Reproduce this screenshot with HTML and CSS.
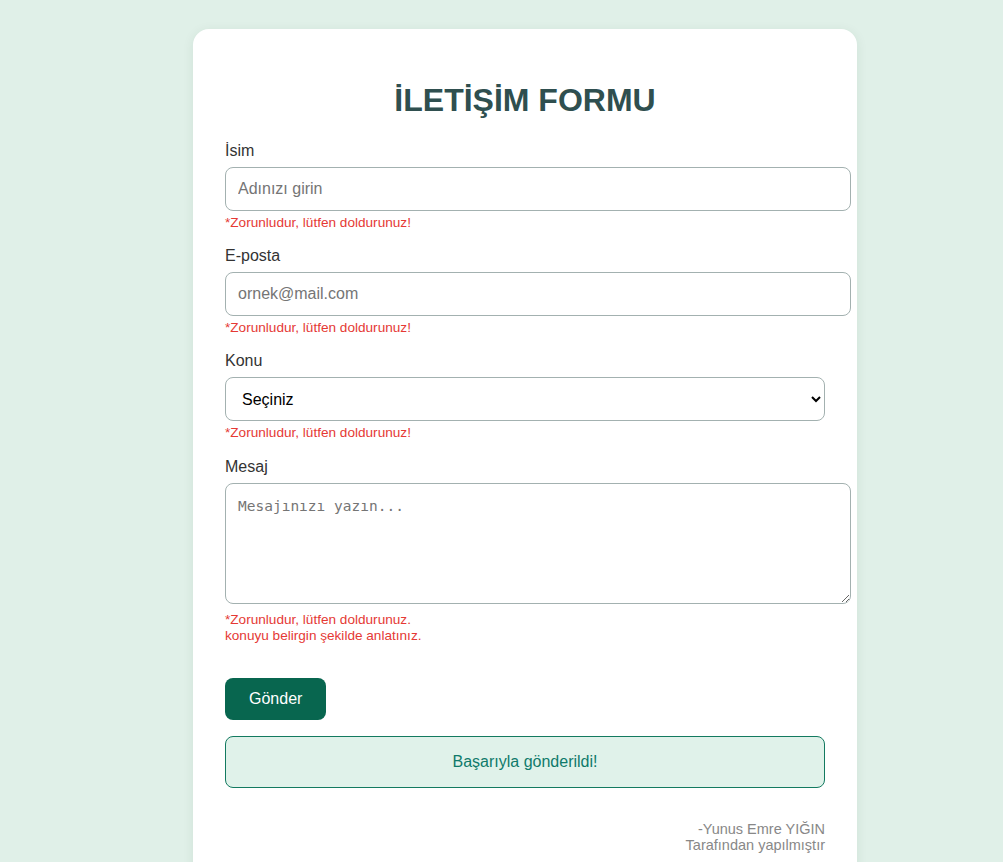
FILE: index.html
```html
<!DOCTYPE html>
<html lang="tr">
<head>
<meta charset="utf-8">
<title>İletişim Formu</title>
<link rel="stylesheet" href="styles.css">
</head>
<body>
<main class="page">
  <form class="card">
    <h1 class="title">İLETİŞİM FORMU</h1>

    <div class="group">
      <label class="label" for="isim">İsim</label>
      <input class="field" id="isim" type="text" placeholder="Adınızı girin">
      <div class="error">*Zorunludur, lütfen doldurunuz!</div>
    </div>

    <div class="group">
      <label class="label" for="eposta">E-posta</label>
      <input class="field" id="eposta" type="email" placeholder="ornek@mail.com">
      <div class="error">*Zorunludur, lütfen doldurunuz!</div>
    </div>

    <div class="group group-select">
      <label class="label" for="konu">Konu</label>
      <select class="select" id="konu">
        <option>Seçiniz</option>
      </select>
      <div class="error">*Zorunludur, lütfen doldurunuz!</div>
    </div>

    <div class="group group-last">
      <label class="label" for="mesaj">Mesaj</label>
      <textarea class="area" id="mesaj" placeholder="Mesajınızı yazın..."></textarea>
      <div class="error error-area">*Zorunludur, lütfen doldurunuz.<br>konuyu belirgin şekilde anlatınız.</div>
    </div>

    <button class="button" type="button">Gönder</button>

    <div class="success">Başarıyla gönderildi!</div>

    <div class="credit">-Yunus Emre YIĞIN<br>Tarafından yapılmıştır</div>
  </form>
</main>
</body>
</html>
```

FILE: styles.css
```css
html, body {
  margin: 0;
  padding: 0;
}

body {
  background: #e0f0e8;
  font-family: "Liberation Sans", Arial, sans-serif;
  color: #333;
  min-height: 862px;
}

.page {
  display: flex;
  justify-content: center;
  padding: 29px 0 0 47px;
}

.card {
  width: 600px;
  background: #fff;
  border-radius: 16px;
  padding: 30px 32px 0;
  box-shadow: 0 2px 12px rgba(0, 60, 40, 0.08);
  min-height: 833px;
  box-sizing: content-box;
}

.title {
  margin: 23px 0 23px;
  text-align: center;
  font-size: 32px;
  line-height: 37px;
  font-weight: bold;
  color: #2f4f4f;
}

.group {
  margin-bottom: 16px;
}

.group-select {
  margin-bottom: 17px;
}

.group-last {
  margin-bottom: 34px;
}

.label {
  display: block;
  font-size: 16px;
  line-height: 18px;
  margin-bottom: 7px;
  color: #333;
}

.field,
.area {
  display: block;
  width: 100%;
  padding: 12px;
  border: 1px solid #a3b1b0;
  border-radius: 8px;
  font-size: 16px;
  line-height: 18px;
  font-family: "Liberation Sans", Arial, sans-serif;
  color: #333;
  box-sizing: content-box;
  margin: 0;
  background: #fff;
}

.field::placeholder {
  color: #757575;
}

.area {
  height: 94px;
  padding-top: 13px;
  font-family: "DejaVu Sans Mono", monospace;
  font-size: 14.5px;
  line-height: 19px;
  resize: vertical;
}

.area::placeholder {
  color: #757575;
}

.select {
  display: block;
  width: 100%;
  height: 44px;
  padding: 0 12px;
  border: 1px solid #a3b1b0;
  border-radius: 8px;
  font-size: 16px;
  font-family: "Liberation Sans", Arial, sans-serif;
  color: #000;
  background: #fff;
  margin: 0;
}

.error {
  color: #e53935;
  font-size: 13.6px;
  line-height: 16px;
  margin-top: 4px;
}

.error-area {
  margin-top: 8px;
}

.button {
  display: block;
  background: #08664f;
  color: #fff;
  border: none;
  border-radius: 8px;
  padding: 12px 24px;
  font-size: 16px;
  line-height: 18px;
  font-family: "Liberation Sans", Arial, sans-serif;
  margin: 0;
}

.success {
  margin-top: 16px;
  padding: 16px;
  background: #e0f2ea;
  border: 1px solid #137a60;
  border-radius: 8px;
  color: #0f7a6a;
  text-align: center;
  font-size: 16px;
  line-height: 18px;
}

.credit {
  margin-top: 33px;
  text-align: right;
  color: #888;
  font-size: 14.5px;
  line-height: 16px;
}
```
